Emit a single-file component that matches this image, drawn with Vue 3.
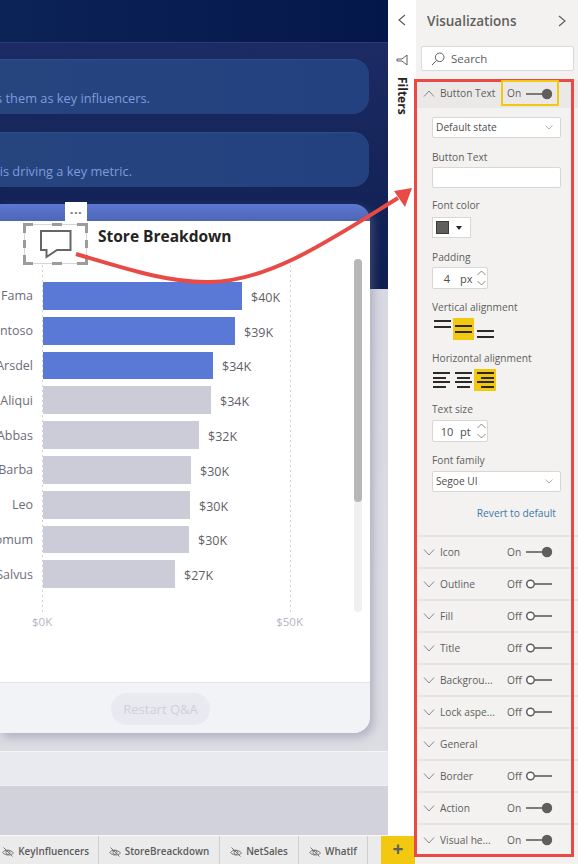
<script setup>
const bars = [
  { name: 'Fama', w: 199, val: '$40K', on: true },
  { name: 'Contoso', w: 192, val: '$39K', on: true },
  { name: 'Arsdel', w: 170, val: '$34K', on: true },
  { name: 'Aliqui', w: 168, val: '$34K' },
  { name: 'Abbas', w: 156, val: '$32K' },
  { name: 'Barba', w: 148, val: '$30K' },
  { name: 'Leo', w: 147, val: '$30K' },
  { name: 'Pomum', w: 146, val: '$30K' },
  { name: 'Salvus', w: 132, val: '$27K' },
]
const sections = [
  { name: 'Icon', state: 'On' },
  { name: 'Outline', state: 'Off' },
  { name: 'Fill', state: 'Off' },
  { name: 'Title', state: 'Off' },
  { name: 'Backgrou...', state: 'Off' },
  { name: 'Lock aspe...', state: 'Off' },
  { name: 'General', state: '' },
  { name: 'Border', state: 'Off' },
  { name: 'Action', state: 'On' },
  { name: 'Visual he...', state: 'On' },
]
const tabs = [
  { name: 'KeyInfluencers', w: 99, cls: 'first' },
  { name: 'StoreBreackdown', w: 121 },
  { name: 'NetSales', w: 79 },
  { name: 'WhatIf', w: 69 },
]
</script>

<template>
  <div class="app">
    <div class="canvas">
      <div class="top"></div>
      <div class="stage">
        <div class="pill"><span>Find out what drives them as key influencers.</span></div>
        <div class="pill second"><span>See what is driving a key metric.</span></div>
        <div class="card">
          <div class="card-bar"></div>
          <div class="card-body">
            <div class="menu">···</div>
            <div class="head">
              <svg class="sel" width="66" height="42" viewBox="0 0 66 42">
                <rect x="1.5" y="1.5" width="62" height="39" fill="none" stroke="#d6d6d6" />
                <path d="M1.5 10V1.5H10M29 1.5H39M54 1.5H63.5V10M1.5 17V25M63.5 17V25M1.5 32V40.5H10M29 40.5H39M54 40.5H63.5V32" stroke="#9c9c9c" stroke-width="3" fill="none" />
              </svg>
              <svg class="bubble" width="32" height="30" viewBox="0 0 32 30">
                <path d="M1 1H30.5V20H17L6.5 27V20H1Z" fill="#fff" stroke="#666" stroke-width="2" />
              </svg>
              <div class="title">Store Breakdown</div>
            </div>
            <div class="chart">
              <i class="grid g0"></i>
              <i class="grid g1"></i>
              <div v-for="b in bars" :key="b.name" class="row">
                <div class="lab"><span>{{ b.name }}</span></div>
                <div class="bar" :class="{ on: b.on }" :style="{ width: b.w + 'px' }"></div>
                <div class="val">{{ b.val }}</div>
              </div>
            </div>
            <div class="axis"><span>$0K</span><span>$50K</span></div>
            <div class="scroll"><div class="thumb"></div></div>
          </div>
          <div class="card-foot"><div class="restart">Restart Q&amp;A</div></div>
        </div>
      </div>
      <div class="strip"></div>
      <div class="under"></div>
      <div class="tabs">
        <div v-for="t in tabs" :key="t.name" class="tab" :class="t.cls" :style="{ width: t.w + 'px' }">
          <svg width="12" height="10" viewBox="0 0 12 10" fill="none" stroke="#777" stroke-width="1">
            <path d="M.5 5.5C3 2.5 8 2 11.5 6C9 8.5 4 9 .5 5.5Z" />
            <circle cx="6" cy="5.5" r="2" />
            <path d="M1.5 .5L10.5 9.5" />
          </svg>
          <span>{{ t.name }}</span>
        </div>
        <div class="gap"></div>
        <div class="add">+</div>
      </div>
    </div>

    <div class="filters">
      <svg class="chev" width="10" height="12" viewBox="0 0 10 12"><path d="M8 1L2 6L8 11" fill="none" stroke="#605e5c" stroke-width="1.2" /></svg>
      <svg class="funnel" width="12" height="12" viewBox="0 0 12 12"><path d="M11 1V11L6 7H1V5H6Z" fill="none" stroke="#605e5c" /></svg>
      <div class="ftext">Filters</div>
    </div>

    <div class="pane">
      <div class="pane-head">
        <span>Visualizations</span>
        <svg width="10" height="12" viewBox="0 0 10 12"><path d="M2 1L8 6L2 11" fill="none" stroke="#605e5c" stroke-width="1.2" /></svg>
      </div>
      <div class="search">
        <svg width="14" height="14" viewBox="0 0 14 14" fill="none" stroke="#605e5c"><circle cx="8.7" cy="5.3" r="4.3" /><path d="M5.6 8.4L1 13" /></svg>
        <span>Search</span>
      </div>
      <div class="sec open">
        <svg class="car" width="12" height="7" viewBox="0 0 12 7"><path d="M1 6.5L6 1L11 6.5" fill="none" stroke="#8a8886" /></svg>
        <span class="sec-name">Button Text</span>
        <span class="state">On</span>
        <svg class="tog" width="28" height="14" viewBox="0 0 28 14"><path d="M0 7H18" stroke="#605e5c" stroke-width="1.6" /><circle cx="21" cy="7" r="5.2" fill="#605e5c" /></svg>
      </div>
      <div class="form">
        <div class="select"><span>Default state</span><svg width="8" height="5" viewBox="0 0 8 5"><path d="M.5 .5L4 4L7.5 .5" fill="none" stroke="#b5b3b1" /></svg></div>
        <div class="grp low"><label>Button Text</label><div class="input"></div></div>
        <div class="grp low g-color"><label>Font color</label>
          <div class="color"><i></i><b></b></div>
        </div>
        <div class="grp low"><label>Padding</label>
          <div class="spin"><span class="n">4</span><span class="u">px</span>
            <svg width="9" height="16" viewBox="0 0 9 16" fill="none" stroke="#8a8886"><path d="M.5 5L4.5 1L8.5 5M.5 11L4.5 15L8.5 11" /></svg>
          </div>
        </div>
        <div class="grp"><label>Vertical alignment</label>
          <div class="aligns">
            <div class="al va-t"><i></i><i></i></div>
            <div class="al va-m act"><i></i><i></i></div>
            <div class="al va-b"><i></i><i></i></div>
          </div>
        </div>
        <div class="grp"><label>Horizontal alignment</label>
          <div class="aligns h">
            <div class="al ha-l"><i></i><i></i><i></i><i></i></div>
            <div class="al ha-c"><i></i><i></i><i></i><i></i></div>
            <div class="al ha-r act"><i></i><i></i><i></i><i></i></div>
          </div>
        </div>
        <div class="grp"><label>Text size</label>
          <div class="spin"><span class="n">10</span><span class="u">pt</span>
            <svg width="9" height="16" viewBox="0 0 9 16" fill="none" stroke="#8a8886"><path d="M.5 5L4.5 1L8.5 5M.5 11L4.5 15L8.5 11" /></svg>
          </div>
        </div>
        <div class="grp"><label>Font family</label>
          <div class="select"><span>Segoe UI</span><svg width="8" height="5" viewBox="0 0 8 5"><path d="M.5 .5L4 4L7.5 .5" fill="none" stroke="#b5b3b1" /></svg></div>
        </div>
        <div class="revert">Revert to default</div>
      </div>
      <div v-for="s in sections" :key="s.name" class="sec">
        <svg class="car" width="12" height="7" viewBox="0 0 12 7"><path d="M1 .5L6 6L11 .5" fill="none" stroke="#8a8886" /></svg>
        <span class="sec-name">{{ s.name }}</span>
        <template v-if="s.state">
          <span class="state">{{ s.state }}</span>
          <svg v-if="s.state === 'On'" class="tog" width="28" height="14" viewBox="0 0 28 14"><path d="M0 7H18" stroke="#605e5c" stroke-width="1.6" /><circle cx="21" cy="7" r="5.2" fill="#605e5c" /></svg>
          <svg v-else class="tog" width="28" height="14" viewBox="0 0 28 14"><path d="M9 7H26" stroke="#605e5c" stroke-width="1.6" /><circle cx="4.5" cy="7" r="3.8" fill="#fff" stroke="#605e5c" stroke-width="1.5" /></svg>
        </template>
      </div>
    </div>

    <div class="red-box"></div>
    <div class="yellow-box"></div>
    <svg class="arrow" width="578" height="864" viewBox="0 0 578 864">
      <path d="M76 254C130 270 170 283 210 282C270 281 330 240 398 198" fill="none" stroke="#e84b45" stroke-width="4" />
      <path d="M412 188L394 191L405 207Z" fill="#e84b45" />
    </svg>
  </div>
</template>

<style>
html, body { margin: 0; background: #fff; }
</style>

<style scoped>
.app {
  position: relative;
  display: flex;
  width: 578px;
  height: 864px;
  overflow: hidden;
  font-family: "Open Sans", "Noto Sans", sans-serif;
  color: #605e5c;
}
.canvas { width: 388px; display: flex; flex-direction: column; flex: none; }
.top { height: 42px; background: linear-gradient(90deg, #0c2358, #04174a); }
.stage {
  height: 709px;
  box-sizing: border-box;
  padding: 16px 0 0;
  border-top: 1px solid #2a3a78;
  background: linear-gradient(#1c2b63 0, #0e1f50 246px, #d8d8e1 246px, #dcdce3 100%);
}
.pill {
  width: 369px;
  height: 55px;
  box-sizing: border-box;
  border-radius: 0 16px 16px 0;
  background: linear-gradient(90deg, #26457f, #23417f);
  border-top: 1px solid #2c4d8e;
  color: #7f9bdc;
  font-size: 12.8px;
  white-space: nowrap;
  position: relative;
}
.pill span { position: absolute; right: 219px; top: 29px; }
.pill.second { margin-top: 18px; }
.pill.second span { right: 237px; }
.card {
  width: 370px;
  margin-top: 17px;
  border-radius: 0 16px 16px 0;
  box-shadow: 3px 4px 10px rgba(120, 120, 150, .45);
}
.card-bar {
  height: 17px;
  border-radius: 0 16px 0 0;
  background: linear-gradient(#5c78d3, #4f66b5);
}
.card-body {
  position: relative;
  height: 461px;
  background: #fff;
}
.menu {
  position: absolute;
  left: 65px;
  top: -19px;
  width: 22px;
  height: 19px;
  background: #fff;
  color: #77757a;
  font-size: 13px;
  font-weight: 700;
  line-height: 21px;
  text-align: center;
  letter-spacing: .5px;
}
.head { position: relative; height: 61px; }
.sel { position: absolute; left: 23px; top: 2px; }
.bubble { position: absolute; left: 40px; top: 9px; }
.title {
  position: absolute;
  left: 98px;
  top: 4px;
  font-size: 15.5px;
  font-weight: 700;
  color: #252423;
  white-space: nowrap;
}
.chart { position: relative; display: flex; flex-direction: column; gap: 7px; }
.grid {
  position: absolute;
  top: -17px;
  bottom: -24px;
  width: 1px;
  background: repeating-linear-gradient(#d0d0d8 0 2px, transparent 2px 5px);
}
.g0 { left: 42px; }
.g1 { left: 290px; }
.row { position: relative; display: flex; align-items: center; height: 27.8px; }
.lab {
  width: 33px;
  display: flex;
  justify-content: flex-end;
  flex: none;
  margin-right: 10px;
  white-space: nowrap;
  font-size: 12.5px;
  color: #6e6c7a;
}
.bar { height: 100%; background: #ccccd9; }
.bar.on { background: #5a78d6; }
.val { margin-left: 9px; padding-top: 3px; font-size: 12.5px; color: #5f5f68; }
.axis {
  display: flex;
  gap: 224px;
  margin: 26px 0 0 32px;
  font-size: 11.5px;
  color: #b3b3c4;
  line-height: 16px;
}
.scroll {
  position: absolute;
  left: 354px;
  top: 38px;
  width: 8px;
  height: 353px;
  border-radius: 4px;
  background: #f0f0f0;
}
.thumb { height: 243px; border-radius: 4px; background: #b7b7b7; }
.card-foot {
  height: 51px;
  border-top: 1px solid #e2e2ea;
  box-sizing: border-box;
  border-radius: 0 0 16px 0;
  background: #f2f3f7;
  padding: 10px 0 0 111px;
}
.restart {
  width: 99px;
  height: 32px;
  border-radius: 16px;
  background: #e9eaef;
  color: #cfd0db;
  font-size: 13px;
  line-height: 32px;
  text-align: center;
}
.strip {
  height: 35px;
  background: #e9eaef;
  border-top: 1px solid #f5f5f8;
  border-bottom: 1px solid #f0f0f4;
  box-sizing: border-box;
}
.under { height: 49px; background: #d2d2dc; }
.tabs {
  height: 29px;
  display: flex;
  background: #ebebeb;
  border-top: 1px solid #f7f7f7;
  box-sizing: border-box;
  white-space: nowrap;
}
.tab {
  flex: none;
  display: flex;
  align-items: center;
  justify-content: center;
  gap: 4px;
  box-sizing: border-box;
  border-right: 1px solid #cfcfcf;
  padding-top: 2px;
  font-size: 9.9px;
  font-weight: 600;
  color: #5b5b5b;
}
.tab.first { justify-content: flex-end; padding-right: 9px; }
.tab svg { margin-top: 2px; flex: none; }
.gap { width: 13px; flex: none; }
.add {
  position: relative;
  flex: none;
  width: 34px;
  background: #f2c811;
  color: #5f5f5f;
  font-size: 19px;
  font-weight: 700;
  line-height: 26px;
  text-align: center;
}
.filters {
  width: 28px;
  flex: none;
  background: #fff;
  display: flex;
  flex-direction: column;
  align-items: center;
  padding-top: 14px;
  box-sizing: border-box;
}
.chev { margin-bottom: 28px; }
.funnel { margin-bottom: 11px; }
.ftext {
  writing-mode: vertical-rl;
  font-size: 12px;
  font-weight: 700;
  color: #252423;
  line-height: 14px;
}
.pane {
  flex: 1;
  background: #f3f2f1;
  display: flex;
  flex-direction: column;
}
.pane-head {
  height: 46px;
  box-sizing: border-box;
  padding: 11px 11px 0 11px;
  display: flex;
  justify-content: space-between;
  align-items: flex-start;
  font-size: 13.5px;
  font-weight: 600;
  line-height: 20px;
}
.pane-head svg { margin-top: 4px; }
.search {
  margin-left: 5px;
  width: 153px;
  height: 25px;
  margin-bottom: 1px;
  box-sizing: border-box;
  background: #fff;
  border: 1px solid #dcdad8;
  border-radius: 2px;
  display: flex;
  align-items: center;
  gap: 6px;
  padding-left: 9px;
  font-size: 11.5px;
  color: #605e5c;
}
.sec {
  height: 32px;
  flex: none;
  box-sizing: border-box;
  border-top: 2px solid #e7e5e4;
  display: flex;
  align-items: center;
  position: relative;
  font-size: 10.2px;
  color: #605e5c;
}
.sec.open {
  margin-top: 8px;
  height: 28px;
  border-top: 0;
  background: #ebe9e8;
  padding-bottom: 2px;
}
.car { margin-left: 7px; }
.sec-name { margin-left: 5px; white-space: nowrap; }
.state { position: absolute; left: 91px; }
.tog { position: absolute; left: 110px; top: 50%; margin-top: -7px; }
.form {
  height: 427px;
  box-sizing: border-box;
  padding: 9px 17px 0 16px;
  display: flex;
  flex-direction: column;
  gap: 12px;
  font-size: 10.2px;
}
.grp { display: flex; flex-direction: column; gap: 3px; }
.g-color { margin-top: -2px; gap: 5px; }
.grp label { line-height: 12px; height: 14px; white-space: nowrap; }
.grp.low label { line-height: 14px; }
.select, .input {
  height: 21px;
  box-sizing: border-box;
  background: #fff;
  border: 1px solid #d9d7d5;
  border-radius: 2px;
  display: flex;
  align-items: center;
  justify-content: space-between;
  padding: 0 7px 0 3px;
  color: #4f4d4b;
}
.select span { padding-bottom: 2px; }
.color {
  width: 39px;
  height: 21px;
  box-sizing: border-box;
  background: #fff;
  border: 1px solid #d9d7d5;
  display: flex;
  align-items: center;
  gap: 7px;
  padding-left: 3px;
}
.color i { width: 11px; height: 11px; background: #605e5c; border: 1px solid #3c3b39; }
.color b {
  border: 3.5px solid transparent;
  border-top: 4px solid #252423;
  border-bottom: 0;
}
.spin {
  width: 56px;
  height: 22px;
  box-sizing: border-box;
  background: #fff;
  border: 1px solid #d9d7d5;
  border-radius: 2px;
  display: flex;
  align-items: center;
  position: relative;
  color: #4f4d4b;
}
.spin .n { position: absolute; left: 0; width: 28px; text-align: center; font-size: 11px; }
.spin .u { position: absolute; left: 27px; font-size: 11px; }
.spin svg { position: absolute; right: 1px; top: 2px; }
.aligns { display: flex; align-items: flex-start; height: 22px; }
.al {
  width: 21px;
  height: 22px;
  box-sizing: border-box;
  display: flex;
  flex-direction: column;
  align-items: center;
  gap: 4px;
}
.al i { display: block; height: 2px; width: 17px; background: #2b2a29; flex: none; }
.act { background: #f2c811; }
.va-t { padding-top: 2px; }
.va-m { justify-content: center; }
.va-b { justify-content: flex-end; padding-bottom: 2px; margin-left: 1px; }
.h .al { gap: 2.5px; justify-content: center; }
.h .ha-r { width: 22px; }
.ha-l i:nth-child(even), .ha-c i:nth-child(even) { width: 13px; }
.ha-l { align-items: flex-start; padding-left: 1px; }
.ha-r i:nth-child(even) { width: 13px; align-self: flex-end; margin-right: 2px; }
.revert { text-align: right; padding-right: 5px; color: #3b79a8; margin-top: 2px; line-height: 14px; }
.red-box {
  position: absolute;
  left: 414px;
  top: 79px;
  width: 160px;
  height: 778px;
  box-sizing: border-box;
  border: 3px solid #ea4a45;
}
.yellow-box {
  position: absolute;
  left: 501px;
  top: 80px;
  width: 58px;
  height: 26px;
  box-sizing: border-box;
  border: 2px solid #f2c811;
}
.arrow { position: absolute; left: 0; top: 0; pointer-events: none; }
</style>
